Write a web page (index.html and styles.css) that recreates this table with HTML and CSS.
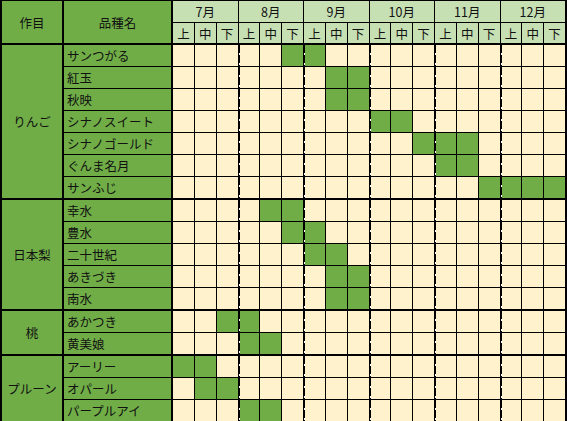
FILE: index.html
```html
<!DOCTYPE html>
<html lang="ja">
<head>
<meta charset="utf-8">
<title>収穫時期</title>
<link rel="stylesheet" href="styles.css">
</head>
<body>
<div class="sheet">
  <div class="hd crop-h">作目</div>
  <div class="hd var-h">品種名</div>
  <div class="mon">7月</div><div class="mon">8月</div><div class="mon">9月</div><div class="mon">10月</div><div class="mon">11月</div><div class="mon">12月</div>
  <div class="day">上</div><div class="day">中</div><div class="day">下</div>
  <div class="day">上</div><div class="day">中</div><div class="day">下</div>
  <div class="day">上</div><div class="day">中</div><div class="day">下</div>
  <div class="day">上</div><div class="day">中</div><div class="day">下</div>
  <div class="day">上</div><div class="day">中</div><div class="day">下</div>
  <div class="day">上</div><div class="day">中</div><div class="day">下</div>
  <div class="sep"></div>

  <div class="crop r7">りんご</div>
  <div class="var">サンつがる</div>
  <span></span><span></span><span></span><span class="m"></span><span></span><span class="g"></span><span class="g m"></span><span></span><span></span><span class="m"></span><span></span><span></span><span class="m"></span><span></span><span></span><span class="m"></span><span></span><span></span>
  <div class="var">紅玉</div>
  <span></span><span></span><span></span><span class="m"></span><span></span><span></span><span class="m"></span><span class="g"></span><span class="g"></span><span class="m"></span><span></span><span></span><span class="m"></span><span></span><span></span><span class="m"></span><span></span><span></span>
  <div class="var">秋映</div>
  <span></span><span></span><span></span><span class="m"></span><span></span><span></span><span class="m"></span><span class="g"></span><span class="g"></span><span class="m"></span><span></span><span></span><span class="m"></span><span></span><span></span><span class="m"></span><span></span><span></span>
  <div class="var">シナノスイート</div>
  <span></span><span></span><span></span><span class="m"></span><span></span><span></span><span class="m"></span><span></span><span></span><span class="g m"></span><span class="g"></span><span></span><span class="m"></span><span></span><span></span><span class="m"></span><span></span><span></span>
  <div class="var">シナノゴールド</div>
  <span></span><span></span><span></span><span class="m"></span><span></span><span></span><span class="m"></span><span></span><span></span><span class="m"></span><span></span><span class="g"></span><span class="g m"></span><span class="g"></span><span></span><span class="m"></span><span></span><span></span>
  <div class="var">ぐんま名月</div>
  <span></span><span></span><span></span><span class="m"></span><span></span><span></span><span class="m"></span><span></span><span></span><span class="m"></span><span></span><span></span><span class="g m"></span><span class="g"></span><span></span><span class="m"></span><span></span><span></span>
  <div class="var">サンふじ</div>
  <span></span><span></span><span></span><span class="m"></span><span></span><span></span><span class="m"></span><span></span><span></span><span class="m"></span><span></span><span></span><span class="m"></span><span></span><span class="g"></span><span class="g m"></span><span class="g"></span><span class="g"></span>
  <div class="sep"></div>

  <div class="crop r5">日本梨</div>
  <div class="var">幸水</div>
  <span></span><span></span><span></span><span class="m"></span><span class="g"></span><span class="g"></span><span class="m"></span><span></span><span></span><span class="m"></span><span></span><span></span><span class="m"></span><span></span><span></span><span class="m"></span><span></span><span></span>
  <div class="var">豊水</div>
  <span></span><span></span><span></span><span class="m"></span><span></span><span class="g"></span><span class="g m"></span><span></span><span></span><span class="m"></span><span></span><span></span><span class="m"></span><span></span><span></span><span class="m"></span><span></span><span></span>
  <div class="var">二十世紀</div>
  <span></span><span></span><span></span><span class="m"></span><span></span><span></span><span class="g m"></span><span class="g"></span><span></span><span class="m"></span><span></span><span></span><span class="m"></span><span></span><span></span><span class="m"></span><span></span><span></span>
  <div class="var">あきづき</div>
  <span></span><span></span><span></span><span class="m"></span><span></span><span></span><span class="m"></span><span class="g"></span><span class="g"></span><span class="m"></span><span></span><span></span><span class="m"></span><span></span><span></span><span class="m"></span><span></span><span></span>
  <div class="var">南水</div>
  <span></span><span></span><span></span><span class="m"></span><span></span><span></span><span class="m"></span><span class="g"></span><span class="g"></span><span class="m"></span><span></span><span></span><span class="m"></span><span></span><span></span><span class="m"></span><span></span><span></span>
  <div class="sep"></div>

  <div class="crop r2">桃</div>
  <div class="var">あかつき</div>
  <span></span><span></span><span class="g"></span><span class="g m"></span><span></span><span></span><span class="m"></span><span></span><span></span><span class="m"></span><span></span><span></span><span class="m"></span><span></span><span></span><span class="m"></span><span></span><span></span>
  <div class="var">黄美娘</div>
  <span></span><span></span><span></span><span class="g m"></span><span class="g"></span><span></span><span class="m"></span><span></span><span></span><span class="m"></span><span></span><span></span><span class="m"></span><span></span><span></span><span class="m"></span><span></span><span></span>
  <div class="sep"></div>

  <div class="crop r3">プルーン</div>
  <div class="var">アーリー</div>
  <span class="g"></span><span class="g"></span><span></span><span class="m"></span><span></span><span></span><span class="m"></span><span></span><span></span><span class="m"></span><span></span><span></span><span class="m"></span><span></span><span></span><span class="m"></span><span></span><span></span>
  <div class="var">オパール</div>
  <span></span><span class="g"></span><span class="g"></span><span class="m"></span><span></span><span></span><span class="m"></span><span></span><span></span><span class="m"></span><span></span><span></span><span class="m"></span><span></span><span></span><span class="m"></span><span></span><span></span>
  <div class="var">パープルアイ</div>
  <span></span><span></span><span></span><span class="g m"></span><span class="g"></span><span></span><span class="m"></span><span></span><span></span><span class="m"></span><span></span><span></span><span class="m"></span><span></span><span></span><span class="m"></span><span></span><span></span>
</div>
</body>
</html>
```
FILE: styles.css
```css
html, body {
  margin: 0;
  padding: 0;
  background: #fff;
}

.sheet {
  display: grid;
  width: 567px;
  box-sizing: border-box;
  border: 2px solid #000;
  border-top-width: 1px;
  background: #000;
  gap: 1px;
  grid-template-columns: 61px 108px repeat(18, 1fr);
  font-family: "Noto Sans CJK JP", "Noto Sans", sans-serif;
  font-size: 12.5px;
  color: #111;
}

.sheet > div {
  display: flex;
  align-items: center;
  box-sizing: border-box;
  min-width: 0;
  white-space: nowrap;
  overflow: hidden;
}

.hd {
  grid-row: span 2;
  justify-content: center;
  background: #70ad47;
  border-right: 1px solid #000;
}

.mon {
  grid-column: span 3;
  height: 21px;
  justify-content: center;
  background: #c6e0b4;
}

.day {
  height: 20px;
  justify-content: center;
  background: #c6e0b4;
}

.sep {
  grid-column: 1 / -1;
  height: 0;
}

.crop {
  justify-content: center;
  background: #70ad47;
  border-right: 1px solid #000;
}

.r7 { grid-row: span 7; }
.r5 { grid-row: span 5; }
.r3 { grid-row: span 3; }
.r2 { grid-row: span 2; }

.var {
  height: 21px;
  padding-left: 3px;
  background: #70ad47;
  border-right: 1px solid #000;
}

.sheet > span {
  display: block;
  height: 21px;
  background-color: #fff2cc;
}

.sheet > span.g {
  background-color: #70ad47;
}

.sheet > span.m {
  background-image: repeating-linear-gradient(to bottom, #000 0 8px, #fff 8px 10px);
  background-size: 1px 100%;
  background-repeat: no-repeat;
  background-position: left top;
}
```
